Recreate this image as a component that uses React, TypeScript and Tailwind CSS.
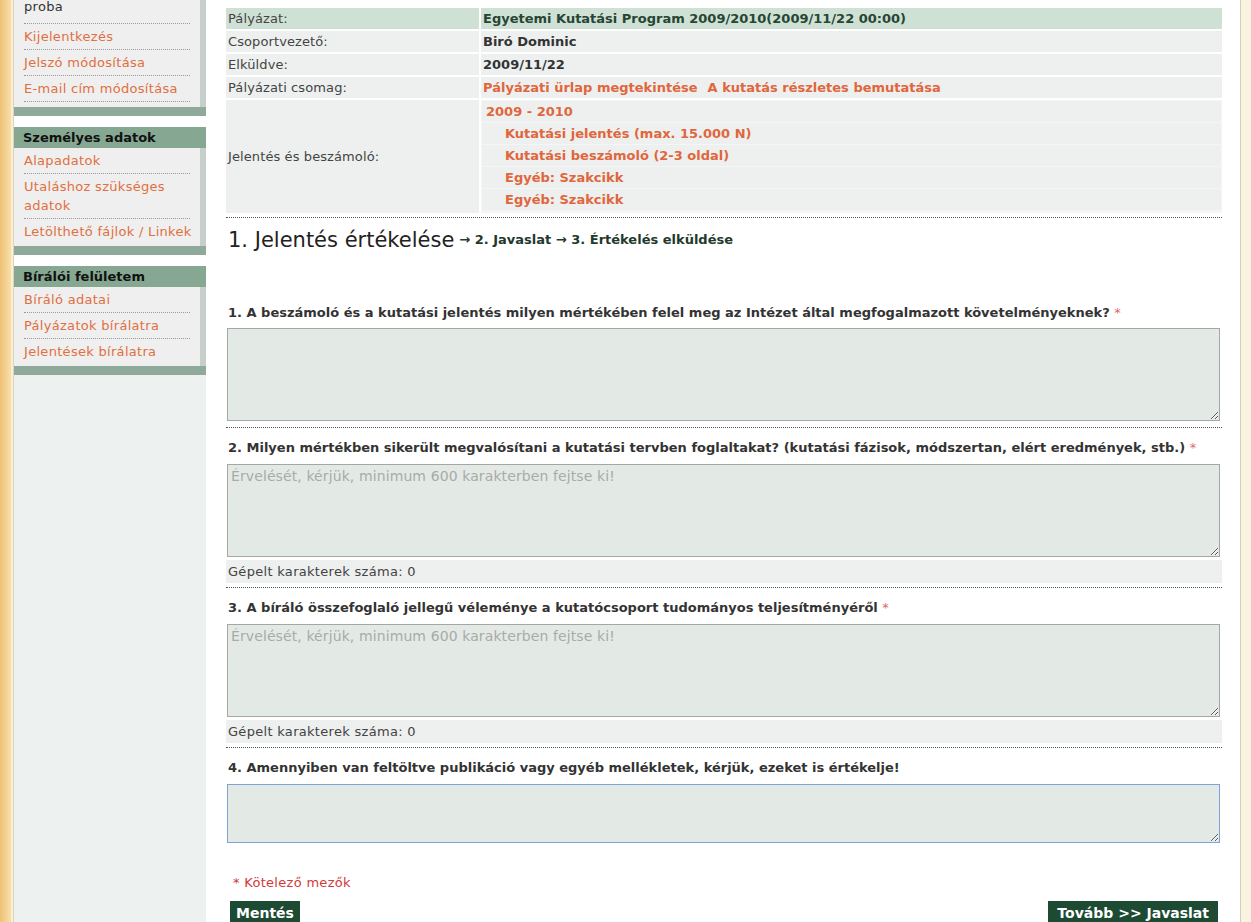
import React from 'react';

const font = { fontFamily: '"DejaVu Sans", Verdana, sans-serif' };

function SideItem({ children, dark = false, last = false }: { children: React.ReactNode; dark?: boolean; last?: boolean }) {
  return (
    <div className={`mx-[10px] pt-[3px] whitespace-nowrap text-[13px] leading-[19px] tracking-[0.3px] ${last ? 'pb-[5px]' : 'pb-[3px] border-b border-dotted border-[#9a9a9a]'} ${dark ? 'text-[#333]' : 'text-[#e0703f]'}`}>
      {children}
    </div>
  );
}

function SideBox({ title, children }: { title?: string; children: React.ReactNode }) {
  return (
    <div className="flex flex-col">
      {title && (
        <div className="h-[21px] bg-[#86a893] px-[9px] text-[13px] font-bold leading-[22px] text-[#111]">{title}</div>
      )}
      <div className="bg-[#efefef] border-r-[6px] border-[#c6cfca]">{children}</div>
      <div className="h-[9px] bg-[#8fa99a]" />
    </div>
  );
}

function InfoRow({ label, children, head = false }: { label: string; children: React.ReactNode; head?: boolean }) {
  const bg = head ? 'bg-[#cfe1d5]' : 'bg-[#edf0ee]';
  return (
    <div className="flex gap-[2px] h-[21px]">
      <div className={`w-[253px] ${bg} px-[2px] text-[13px] leading-[21px] tracking-[0.1px] text-[#444]`}>{label}</div>
      <div className={`flex-1 ${bg} px-[2px] text-[13px] font-bold leading-[21px] text-[#333]`}>{children}</div>
    </div>
  );
}

function Dotted({ className = '' }: { className?: string }) {
  return <div className={`border-t border-dotted border-[#555] ${className}`} />;
}

function Question({ text, required = true }: { text: string; required?: boolean }) {
  return (
    <div className="text-[13px] font-bold leading-[16px] text-[#333] px-[2px]">
      {text} {required && <span className="font-normal text-[#e06a6a]">*</span>}
    </div>
  );
}

function Area({ placeholder, h, focus = false }: { placeholder?: string; h: string; focus?: boolean }) {
  return (
    <textarea
      placeholder={placeholder}
      className={`block ml-[1px] w-[993px] ${h} bg-[#e3eae6] border ${focus ? 'border-[#7fa3d6]' : 'border-[#a6a6a6]'} px-[3px] py-[2px] text-[14px] leading-[18px] tracking-[0.1px] text-[#333] placeholder:text-[#a9aaa9] outline-none`}
      style={font}
    />
  );
}

function Counter() {
  return (
    <div className="h-[23px] bg-[#edf0ee] px-[2px] text-[13px] leading-[23px] tracking-[0.3px] text-[#444]">Gépelt karakterek száma: 0</div>
  );
}

export default function App() {
  return (
    <div className="flex w-[1251px] h-[922px] overflow-hidden bg-white" style={font}>
      {/* left decorative strip */}
      <div className="w-[11px] bg-gradient-to-r from-[#efc177] to-[#f8e0a9]" />
      <div className="w-[3px] bg-[#fbeed2] border-r border-[#ddd4bb]" />

      {/* sidebar */}
      <div className="w-[192px] bg-[#edf1ef] flex flex-col">
        <SideBox>
          <div className="mx-[10px] h-[24px] text-[13px] leading-[14px] tracking-[0.3px] text-[#333] border-b border-dotted border-[#9a9a9a]">proba</div>
          <SideItem>Kijelentkezés</SideItem>
          <SideItem>Jelszó módosítása</SideItem>
          <SideItem>E-mail cím módosítása</SideItem>
          <div className="h-[5px]" />
        </SideBox>
        <div className="h-[11px] bg-white" />
        <SideBox title="Személyes adatok">
          <SideItem>Alapadatok</SideItem>
          <SideItem>Utaláshoz szükséges<br />adatok</SideItem>
          <SideItem last>Letölthető fájlok / Linkek</SideItem>
        </SideBox>
        <div className="h-[11px] bg-white" />
        <SideBox title="Bírálói felületem">
          <SideItem>Bíráló adatai</SideItem>
          <SideItem>Pályázatok bírálatra</SideItem>
          <SideItem last>Jelentések bírálatra</SideItem>
        </SideBox>
      </div>

      {/* main content */}
      <div className="w-[1034px] pl-[20px] pr-[18px] pt-[8px] flex flex-col">
        <div className="flex flex-col gap-[2px]">
          <InfoRow label="Pályázat:" head>
            <span className="text-[#274534]">Egyetemi Kutatási Program 2009/2010(2009/11/22 00:00)</span>
          </InfoRow>
          <InfoRow label="Csoportvezető:">Biró Dominic</InfoRow>
          <InfoRow label="Elküldve:">2009/11/22</InfoRow>
          <InfoRow label="Pályázati csomag:">
            <span className="text-[#e0663d]">Pályázati ürlap megtekintése</span>
            <span className="ml-[10px] text-[#e0663d]">A kutatás részletes bemutatása</span>
          </InfoRow>
          <div className="flex gap-[2px] h-[113px]">
            <div className="w-[253px] bg-[#edf0ee] px-[2px] flex items-center text-[13px] tracking-[0.1px] text-[#444]">Jelentés és beszámoló:</div>
            <div className="flex-1 bg-[#f4f6f5] p-[1px] flex flex-col gap-[1px] text-[13px] font-bold text-[#e0663d]">
              <div className="h-[21px] bg-[#edf0ee] px-[4px] leading-[21px]">2009 - 2010</div>
              <div className="h-[21px] bg-[#edf0ee] pl-[23px] leading-[21px]">Kutatási jelentés (max. 15.000 N)</div>
              <div className="h-[21px] bg-[#edf0ee] pl-[23px] leading-[21px]">Kutatási beszámoló (2-3 oldal)</div>
              <div className="h-[21px] bg-[#edf0ee] pl-[23px] leading-[21px]">Egyéb: Szakcikk</div>
              <div className="h-[21px] bg-[#edf0ee] pl-[23px] leading-[21px]">Egyéb: Szakcikk</div>
            </div>
          </div>
        </div>

        <Dotted className="mt-[4px]" />

        <div className="mt-[9px] flex items-center px-[2px] text-[#222]">
          <span className="text-[21px] leading-[26px]">1. Jelentés értékelése</span>
          <span className="ml-[5px] text-[13px] font-bold text-[#1f3a2c]">→ 2. Javaslat → 3. Értékelés elküldése</span>
        </div>

        <div className="mt-[52px]">
          <Question text="1. A beszámoló és a kutatási jelentés milyen mértékében felel meg az Intézet által megfogalmazott követelményeknek?" />
        </div>
        <div className="mt-[7px]">
          <Area h="h-[93px]" />
        </div>
        <Dotted className="mt-[6px]" />

        <div className="mt-[12px]">
          <Question text="2. Milyen mértékben sikerült megvalósítani a kutatási tervben foglaltakat? (kutatási fázisok, módszertan, elért eredmények, stb.)" />
        </div>
        <div className="mt-[8px]">
          <Area h="h-[93px]" placeholder="Érvelését, kérjük, minimum 600 karakterben fejtse ki!" />
        </div>
        <div className="mt-[3px]">
          <Counter />
        </div>
        <Dotted className="mt-[4px]" />

        <div className="mt-[12px]">
          <Question text="3. A bíráló összefoglaló jellegű véleménye a kutatócsoport tudományos teljesítményéről" />
        </div>
        <div className="mt-[8px]">
          <Area h="h-[93px]" placeholder="Érvelését, kérjük, minimum 600 karakterben fejtse ki!" />
        </div>
        <div className="mt-[3px]">
          <Counter />
        </div>
        <Dotted className="mt-[4px]" />

        <div className="mt-[12px]">
          <Question text="4. Amennyiben van feltöltve publikáció vagy egyéb mellékletek, kérjük, ezeket is értékelje!" required={false} />
        </div>
        <div className="mt-[8px]">
          <Area h="h-[59px]" focus />
        </div>

        <div className="mt-[32px] pl-[7px] text-[13px] leading-[16px] tracking-[0.3px] text-[#d03a3a]">* Kötelező mezők</div>

        <div className="mt-[10px] flex justify-between pl-[4px] pr-[4px]">
          <button className="h-[24px] bg-[#1d4a33] px-[6px] text-[14px] font-bold leading-[24px] text-white" style={font}>Mentés</button>
          <button className="h-[24px] bg-[#1d4a33] px-[9px] text-[14px] font-bold leading-[24px] text-white" style={font}>Tovább &gt;&gt; Javaslat</button>
        </div>
      </div>

      {/* right decorative strip */}
      <div className="w-[1px] bg-[#d8ceb2]" />
      <div className="flex-1 bg-[#fbf3e2]" />
    </div>
  );
}
